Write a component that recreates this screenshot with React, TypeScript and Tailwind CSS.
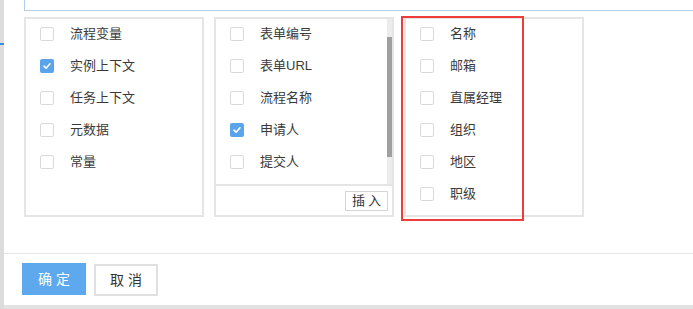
import React from "react";

const font = { fontFamily: '"Liberation Sans", "Noto Sans CJK SC", sans-serif' };

function Checkbox({ checked }: { checked?: boolean }) {
  if (checked) {
    return (
      <span className="w-[14px] h-[14px] rounded-[2px] bg-[#5aa4ec] flex items-center justify-center shrink-0">
        <svg width="10" height="10" viewBox="0 0 10 10">
          <path d="M2 5.2 L4.1 7.2 L8 2.8" stroke="#fff" strokeWidth="1.6" fill="none" strokeLinecap="round" strokeLinejoin="round" />
        </svg>
      </span>
    );
  }
  return <span className="w-[14px] h-[14px] rounded-[2px] border border-[#d9d9d9] bg-white shrink-0" />;
}

function Row({ label, checked }: { label: string; checked?: boolean }) {
  return (
    <div className="h-[32px] flex items-center pl-[14px]">
      <Checkbox checked={checked} />
      <span className="ml-[16px] text-[13px] text-[#3a3a3a]">{label}</span>
    </div>
  );
}

export default function App() {
  return (
    <div className="w-[693px] h-[309px] bg-[#e2e2e2] overflow-hidden flex" style={font}>
      <div className="w-[4px] relative bg-[#dcdcdc]">
        <div className="absolute left-0 top-[43px] w-[4px] h-[2px] bg-[#3a8ee6]" />
      </div>
      <div className="flex-1 h-[305px] bg-white flex flex-col">
        <div className="ml-[20px] h-[11px] border-l border-b border-[#b4cdea]" />

        <div className="mt-[6px] ml-[20px] flex gap-[10px]">
          <div className="w-[180px] h-[200px] border-2 border-[#e5e5e5]">
            <div className="-mt-px">
              <Row label="流程变量" />
              <Row label="实例上下文" checked />
              <Row label="任务上下文" />
              <Row label="元数据" />
              <Row label="常量" />
            </div>
          </div>

          <div className="w-[180px] h-[200px] border-2 border-[#e5e5e5] flex flex-col">
            <div className="relative h-[165px] overflow-hidden">
              <div className="-mt-px">
                <Row label="表单编号" />
                <Row label="表单URL" />
                <Row label="流程名称" />
                <Row label="申请人" checked />
                <Row label="提交人" />
              </div>
              <div className="absolute right-0 top-0 w-[5px] h-full bg-[#ececec]">
                <div className="mt-[18px] h-[120px] bg-[#a0a0a0]" />
              </div>
            </div>
            <div className="flex-1 border-t-2 border-[#e5e5e5] flex items-center justify-end pr-[4px]">
              <button className="w-[43px] h-[20px] border border-[#d5d5d5] bg-white text-[13px] text-[#333] tracking-[3px] pl-[3px] leading-none">
                插入
              </button>
            </div>
          </div>

          <div className="relative w-[180px] h-[200px] border-2 border-[#e5e5e5]">
            <div className="-mt-px">
              <Row label="名称" />
              <Row label="邮箱" />
              <Row label="直属经理" />
              <Row label="组织" />
              <Row label="地区" />
              <Row label="职级" />
            </div>
            <div className="absolute left-[-5px] top-[-3px] w-[123px] h-[205px] border-2 border-[#ee3b3b]" />
          </div>
        </div>

        <div className="mt-[36px] border-t border-[#e6e6e6]" />

        <div className="mt-[9px] ml-[18px] flex gap-[8px]">
          <button className="w-[64px] h-[32px] bg-[#5ea8ee] text-white text-[14px] tracking-[4px] pl-[4px]">
            确定
          </button>
          <button className="w-[64px] h-[32px] mt-px border-2 border-[#e0e0e0] bg-white text-[#333] text-[14px] tracking-[4px] pl-[4px]">
            取消
          </button>
        </div>
      </div>
    </div>
  );
}
